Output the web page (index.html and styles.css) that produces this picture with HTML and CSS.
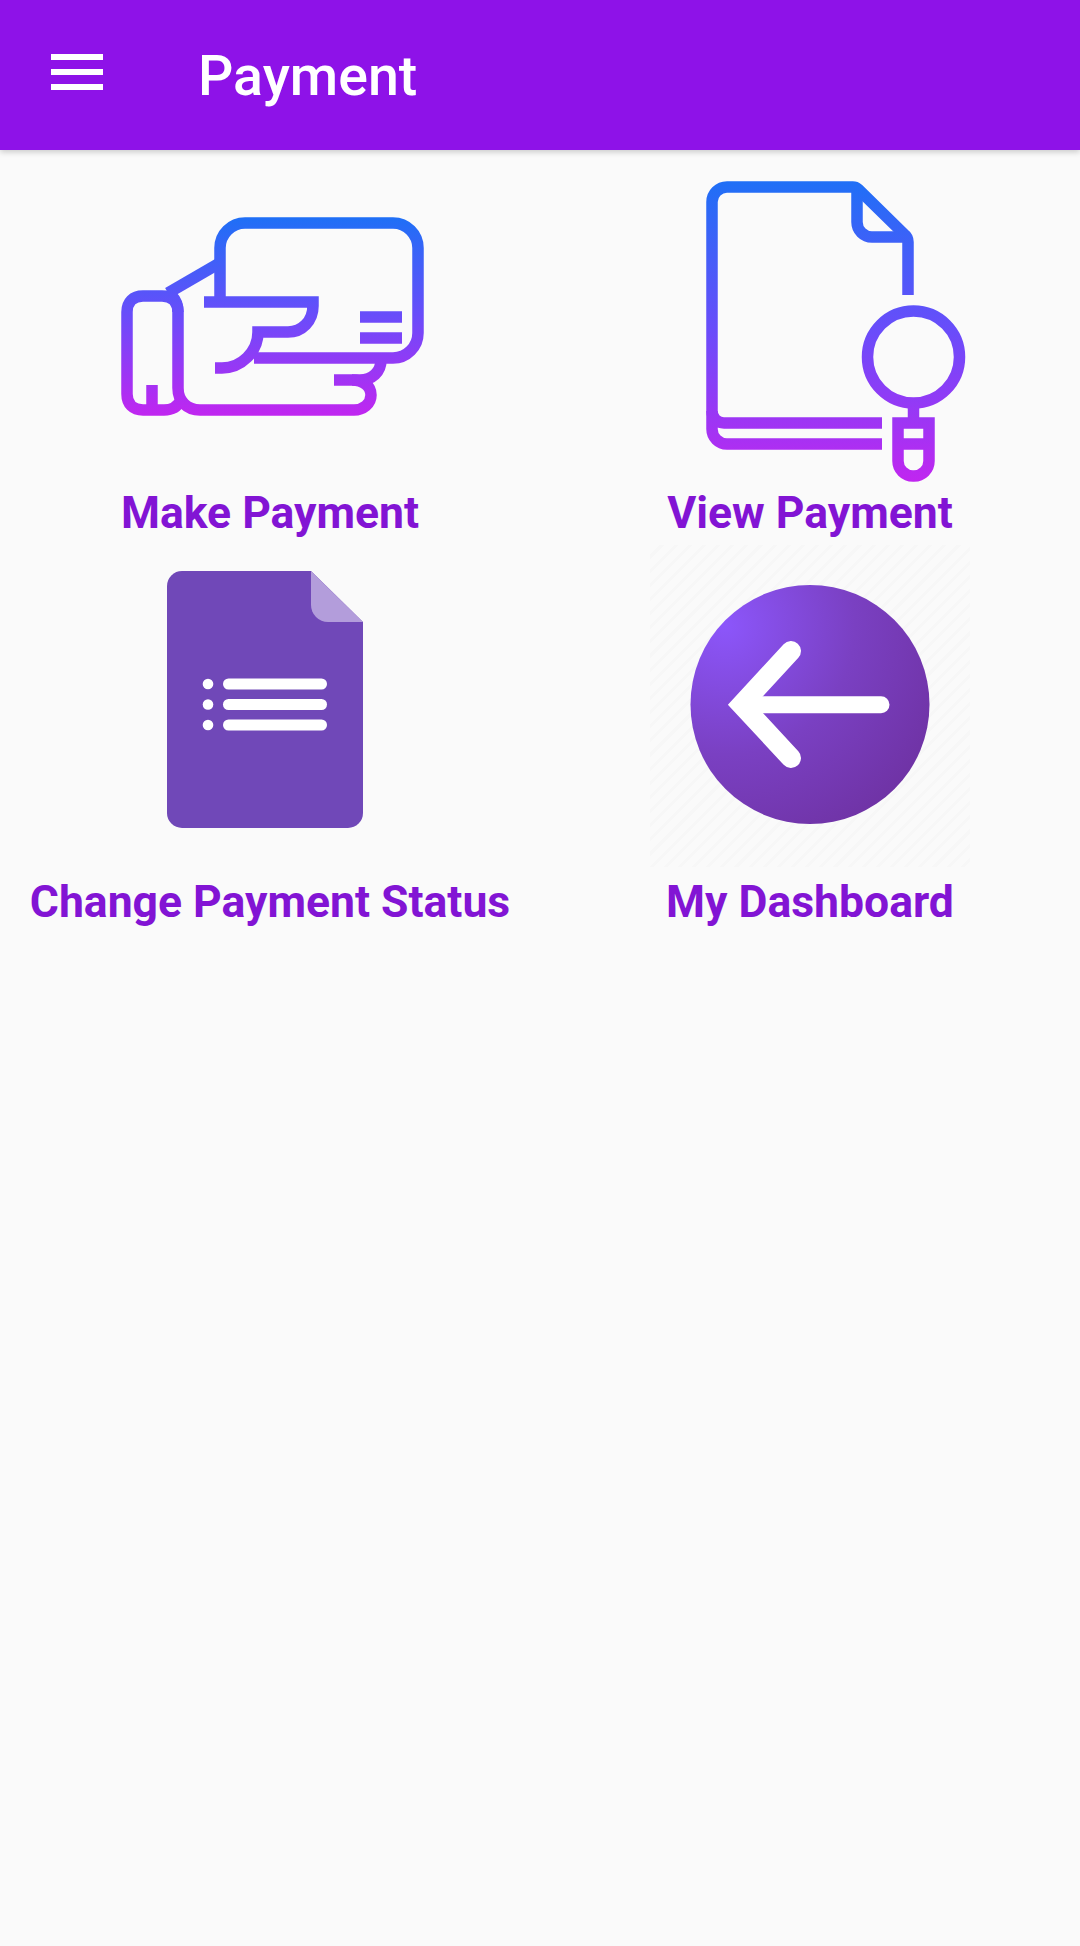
FILE: index.html
```html
<!DOCTYPE html>
<html lang="en">
<head>
  <meta charset="UTF-8" />
  <title>Payment</title>
  <link rel="stylesheet" href="styles.css">
</head>
<body>
  <div class="app-bar">
    <div class="menu-button">
      <span></span>
      <span></span>
      <span></span>
    </div>
    <h1 class="app-title">Payment</h1>
  </div>

  <div class="menu-grid">
    <div class="menu-item">
      <svg class="menu-icon" viewBox="110 156 320 322">
        <defs>
          <linearGradient id="makeGrad" gradientUnits="userSpaceOnUse" x1="0" y1="218" x2="0" y2="415">
            <stop offset="0" stop-color="#1f6ff6" />
            <stop offset="0.5" stop-color="#6a4cfa" />
            <stop offset="1" stop-color="#c026f0" />
          </linearGradient>
        </defs>
        <g fill="none" stroke="url(#makeGrad)" stroke-width="11.5">
          <!-- card -->
          <path d="M220 302 V248 a25 25 0 0 1 25 -25 H393 a25 25 0 0 1 25 25 V333 a25 25 0 0 1 -25 25 H254" />
          <path d="M360 317 H402 M360 338 H402" />
          <!-- fingers -->
          <path d="M204 302 H313 V306 C313 321 302 332 288 332 H258 C258 352 241 368 222 368 H215" />
          <path d="M381 360 C381 372 372 380 360 380 H334" />
          <path d="M352 380 C363 380 371 386 371 395 C371 404 363 410 354 410 H200 C187 410 178 401 178 388 V312 C178 306 176 300 172 296" />
          <!-- sleeve -->
          <path d="M168 293 L218 264" />
          <path d="M178 312 C178 302 172 296 162 296 H143 C133 296 127 302 127 312 V394 C127 404 133 410 143 410 H164 C172 410 178 406 181 400" />
          <path d="M152 385 V410" />
        </g>
      </svg>
      <div class="menu-label">Make Payment</div>
    </div>

    <div class="menu-item">
      <svg class="menu-icon" viewBox="650 156 320 322">
        <defs>
          <linearGradient id="viewGrad" gradientUnits="userSpaceOnUse" x1="0" y1="182" x2="0" y2="481">
            <stop offset="0" stop-color="#1f6ff6" />
            <stop offset="0.5" stop-color="#6a4cfa" />
            <stop offset="1" stop-color="#c026f0" />
          </linearGradient>
        </defs>
        <g fill="none" stroke="url(#viewGrad)" stroke-width="11.5">
          <path d="M882 444 H727 a15 15 0 0 1 -15 -15 V202 a15 15 0 0 1 15 -15 H852 a8 8 0 0 1 6 2 L904 234 a10 10 0 0 1 4 8 V295" />
          <path d="M857 187 V222 a15 15 0 0 0 15 15 H908" />
          <path d="M882 423 H724 a12 12 0 0 1 -12 -12" />
          <circle cx="913.5" cy="357" r="46" />
          <path d="M913.5 403 V423" />
          <path d="M898 423 H929 V461 a15 15 0 0 1 -15 15 H913 a15 15 0 0 1 -15 -15 Z" />
          <path d="M898 444 H929" />
        </g>
      </svg>
      <div class="menu-label">View Payment</div>
    </div>

    <div class="menu-item">
      <svg class="menu-icon" viewBox="110 545 320 322">
        <path fill="#7048b8" d="M182 571 H311 L363 622 V813 a15 15 0 0 1 -15 15 H182 a15 15 0 0 1 -15 -15 V586 a15 15 0 0 1 15 -15 Z" />
        <path fill="#b39ddb" d="M311 571 L363 622 H328 a17 17 0 0 1 -17 -17 Z" />
        <g fill="#fff">
          <circle cx="208" cy="684" r="5.3" />
          <circle cx="208" cy="704.5" r="5.3" />
          <circle cx="208" cy="725" r="5.3" />
          <rect x="223" y="678.5" width="104" height="11" rx="5.5" />
          <rect x="223" y="699" width="104" height="11" rx="5.5" />
          <rect x="223" y="719.5" width="104" height="11" rx="5.5" />
        </g>
      </svg>
      <div class="menu-label">Change Payment Status</div>
    </div>

    <div class="menu-item">
      <svg class="menu-icon menu-icon-striped" viewBox="650 545 320 322">
        <defs>
          <radialGradient id="backGrad" gradientUnits="userSpaceOnUse" cx="725" cy="625" r="260">
            <stop offset="0" stop-color="#8c56fb" />
            <stop offset="0.5" stop-color="#7a40c2" />
            <stop offset="1" stop-color="#6d309f" />
          </radialGradient>
        </defs>
        <circle cx="810" cy="704.5" r="119.5" fill="url(#backGrad)" />
        <path fill="none" stroke="#fff" stroke-width="17" stroke-linecap="round" d="M881 704.7 H745" />
        <path fill="none" stroke="#fff" stroke-width="20" stroke-linecap="round" stroke-miterlimit="4" d="M791 651 L741.5 704.7 L791 758" />
      </svg>
      <div class="menu-label">My Dashboard</div>
    </div>
  </div>
</body>
</html>
```

FILE: styles.css
```css
body {
  margin: 0;
  min-height: 1946px;
  font-family: "Roboto", sans-serif;
  background-color: #fafafa;
}
.app-bar {
  display: flex;
  align-items: center;
  height: 150px;
  background-color: #8e12e8;
  box-shadow: 0 2px 6px rgba(0,0,0,0.2);
}
.menu-button {
  display: flex;
  flex-direction: column;
  gap: 9px;
  width: 52px;
  margin-left: 51px;
  margin-top: -6px;
}
.menu-button span {
  display: block;
  height: 6px;
  background-color: #fff;
}
.app-title {
  margin: 2px 0 0 95px;
  font-size: 55.5px;
  font-weight: 500;
  color: #fff;
}
.menu-grid {
  display: grid;
  grid-template-columns: 1fr 1fr;
  padding-top: 6px;
}
.menu-item {
  display: flex;
  flex-direction: column;
  align-items: center;
}
.menu-icon {
  display: block;
  width: 320px;
  height: 322px;
  overflow: visible;
}
.menu-icon-striped {
  background: repeating-linear-gradient(135deg, #fafafa 0, #fafafa 7px, #f7f7f7 7px, #f7f7f7 10px);
}
.menu-label {
  height: 67px;
  line-height: 70px;
  font-size: 44.5px;
  font-weight: 700;
  color: #8214d4;
  white-space: nowrap;
}
```
